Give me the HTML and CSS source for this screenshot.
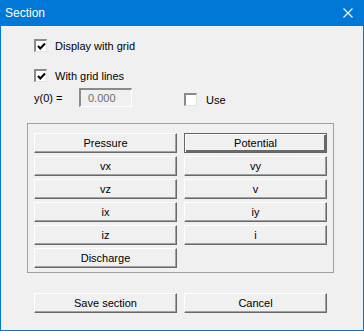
FILE: index.html
```html
<!DOCTYPE html>
<html lang="en">
<head>
  <meta charset="UTF-8" />
  <title>Section</title>
  <link rel="stylesheet" href="styles.css">
</head>
<body>
  <div class="window">
    <div class="titlebar">
      <span class="title">Section</span>
      <svg class="close" width="10" height="10" viewBox="0 0 10 10">
        <path d="M0.5 0.5 L9.5 9.5 M9.5 0.5 L0.5 9.5" stroke="#fff" stroke-width="1.1" fill="none"/>
      </svg>
    </div>

    <div class="content">
      <div class="opts">
        <label class="check-row first">
          <span class="check checked">
            <svg width="9" height="9" viewBox="0 0 9 9"><path d="M1 4 L3.3 6.5 L8 1.5" stroke="#000" stroke-width="2" fill="none"/></svg>
          </span>
          Display with grid
        </label>

        <label class="check-row second">
          <span class="check checked">
            <svg width="9" height="9" viewBox="0 0 9 9"><path d="M1 4 L3.3 6.5 L8 1.5" stroke="#000" stroke-width="2" fill="none"/></svg>
          </span>
          With grid lines
        </label>

        <div class="y-row">
          <span class="y-label">y(0) =</span>
          <span class="field">0.000</span>
          <label class="check-row use">
            <span class="check"></span>
            Use
          </label>
        </div>
      </div>

      <div class="group">
        <button class="btn">Pressure</button>
        <button class="btn default">Potential</button>
        <button class="btn">vx</button>
        <button class="btn">vy</button>
        <button class="btn">vz</button>
        <button class="btn">v</button>
        <button class="btn">ix</button>
        <button class="btn">iy</button>
        <button class="btn">iz</button>
        <button class="btn">i</button>
        <button class="btn">Discharge</button>
      </div>

      <div class="actions">
        <button class="btn">Save section</button>
        <button class="btn">Cancel</button>
      </div>
    </div>
  </div>
</body>
</html>
```

FILE: styles.css
```css
body {
  margin: 0;
  padding: 0;
  font-family: "Liberation Sans", Arial, sans-serif;
  font-size: 11px;
  color: #000;
  background: #f0f0f0;
}

.window {
  width: 364px;
  height: 331px;
  box-sizing: border-box;
  border: 1px solid #0078d7;
  border-top: none;
  background: #f0f0f0;
}

.titlebar {
  height: 26px;
  margin: 0 -1px;
  background: #0078d7;
  color: #fff;
  display: flex;
  align-items: center;
  justify-content: space-between;
  padding: 0 11px 0 5px;
}

.title {
  font-size: 12px;
}

.content {
  padding-left: 26px;
}

.opts {
  padding-left: 7px;
}

.check-row {
  display: flex;
  align-items: center;
  gap: 8px;
  height: 13px;
}

.check-row.first {
  margin-top: 13px;
}

.check-row.second {
  margin-top: 17px;
}

.check {
  width: 13px;
  height: 13px;
  box-sizing: border-box;
  border-top: 2px solid #8a8a8a;
  border-left: 2px solid #8a8a8a;
  border-right: 1px solid #e3e3e3;
  border-bottom: 1px solid #e3e3e3;
  background: #fff;
  display: flex;
  align-items: center;
  justify-content: center;
}

.y-row {
  display: flex;
  align-items: center;
  height: 19px;
  margin-top: 6px;
}

.y-label {
  width: 45px;
}

.field {
  width: 53px;
  height: 19px;
  box-sizing: border-box;
  border-top: 2px solid #8a8a8a;
  border-left: 2px solid #8a8a8a;
  border-right: 1px solid #fff;
  border-bottom: 1px solid #fff;
  color: #6d6d6d;
  padding-left: 7px;
  line-height: 16px;
}

.check-row.use {
  margin-left: 52px;
  margin-top: 4px;
  gap: 9px;
}

.group {
  margin-top: 16px;
  width: 307px;
  box-sizing: border-box;
  border: 1px solid #a0a0a0;
  padding: 9px 0 4px 6px;
  display: grid;
  grid-template-columns: 143px 143px;
  column-gap: 7px;
  row-gap: 3px;
}

.btn {
  height: 20px;
  box-sizing: border-box;
  margin: 0;
  padding: 0;
  font-family: inherit;
  font-size: 11px;
  color: #000;
  background: #f0f0f0;
  border: 1px solid;
  border-color: #fff #696969 #696969 #fff;
  box-shadow: inset -1px -1px 0 #a0a0a0;
}

.btn.default {
  border: 1px solid #646464;
  box-shadow: inset 1px 1px 0 #fff, inset -2px -2px 0 #696969;
}

.actions {
  margin-top: 20px;
  padding-left: 7px;
  display: grid;
  grid-template-columns: 143px 143px;
  column-gap: 7px;
}
```
